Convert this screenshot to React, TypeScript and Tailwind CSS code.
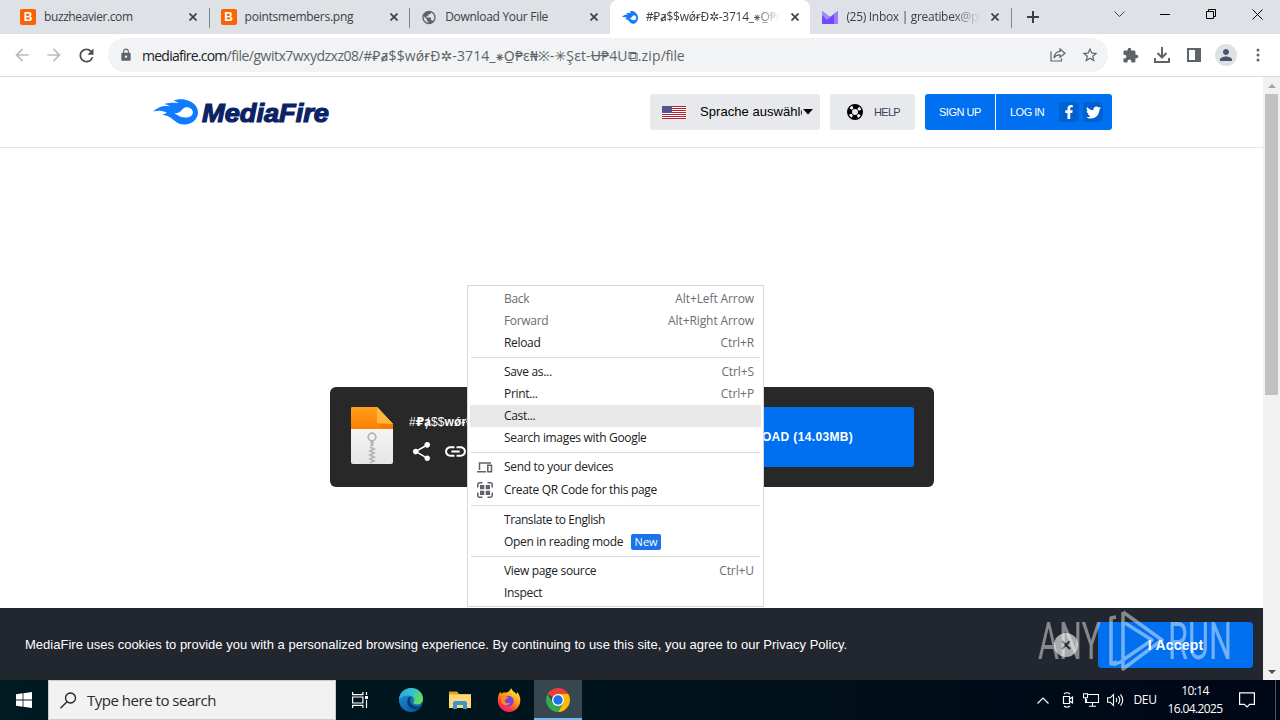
import type { ReactNode } from 'react'
import {
  MdArrowBack,
  MdArrowForward,
  MdExtension,
  MdLink,
  MdLock,
  MdPerson,
  MdPublic,
  MdRefresh,
  MdShare,
  MdStarBorder,
} from 'react-icons/md'
import { FaFacebookF, FaTwitter } from 'react-icons/fa'

interface TabProps {
  icon: ReactNode
  title: string
  active?: boolean
  separator?: boolean
  fade?: boolean
  tracking?: string
}

interface MenuRowProps {
  label: string
  shortcut?: string
  disabled?: boolean
  hovered?: boolean
  icon?: ReactNode
  badge?: string
  tall?: boolean
  tracking?: string
}

const FILE_NAME = '#₽ⱥ$$wǿɍĐ✲-3714_⁕O̲₱ɛ₦※-✳Şɛt-Ʉ₱4U⧉.zip'

function CloseX() {
  return (
    <svg width="8" height="8" viewBox="0 0 8 8" stroke="#3c4043" strokeWidth="1.7">
      <path d="M.5.5l7 7M7.5.5l-7 7" />
    </svg>
  )
}

function BFavicon() {
  return (
    <span className="flex h-4 w-4 items-center justify-center rounded-[2px] bg-[#fa6400] font-['Liberation_Sans'] text-[12px] leading-none font-bold text-white">
      B
    </span>
  )
}

function Flame({ width, height }: { width: number; height: number }) {
  return (
    <svg width={width} height={height} viewBox="0 0 44 26" preserveAspectRatio="none">
      <path
        fill="#0f7bff"
        fillRule="evenodd"
        d="M0 12.5C5 8 10 6 17 7.500C15 6.500 14 5.500 11 5C18 3.500 21 3.800 25 4C23 2.500 22 2 20 1.500C26-.5 31 0 35 1.800C41 4.500 44 8.500 44 13.500C44 20 38 25.500 31 25.500C26 25.500 23 23.500 19.500 20.500C16 17.500 13 16 8 15.800C11 15.400 12 14.600 13.500 13.400C9 11.500 5 11.300 0 12.500ZM20 14.600C24 15.200 26 18.600 31.500 18.600C36 18.600 39 16.500 39 13.400C39 10.300 36 8.300 32.500 8.300C28 8.300 29 14.400 20 14.600Z"
      />
    </svg>
  )
}

function Tab({ icon, title, active, separator, fade, tracking = '' }: TabProps) {
  return (
    <div
      className={`relative flex h-[34px] w-[200.6px] shrink-0 items-center pl-3 ${
        active ? 'rounded-t-lg bg-white' : ''
      }`}
    >
      <span className="flex w-4 shrink-0 justify-center">{icon}</span>
      <span
        className={`ml-2 w-[134px] overflow-hidden text-[12px] whitespace-nowrap text-[#3c4043] ${tracking} ${
          fade ? '[mask-image:linear-gradient(to_right,black_80%,transparent)]' : ''
        }`}
      >
        {title}
      </span>
      <span className="ml-[11px]">
        <CloseX />
      </span>
      {separator && <span className="absolute top-2 -right-px h-5 w-px bg-[#80868b]" />}
    </div>
  )
}

function TabStrip() {
  return (
    <div className="flex h-[34px] shrink-0 bg-[#dee1e6] pl-2">
      <Tab icon={<BFavicon />} title="buzzheavier.com" separator tracking="tracking-[-0.4px]" />
      <Tab icon={<BFavicon />} title="pointsmembers.png" separator tracking="tracking-[-0.25px]" />
      <Tab
        icon={<MdPublic size={17} color="#5f6368" />}
        title="Download Your File"
        tracking="tracking-[-0.3px]"
      />
      <Tab icon={<Flame width={16} height={13} />} title={FILE_NAME} active fade tracking="tracking-[-0.25px]" />
      <Tab
        icon={
          <svg width="16" height="14" viewBox="0 0 16 14">
            <path d="M0 1l8 6 8-6v11q0 2-2 2H0z" fill="#6d4aff" />
            <path d="M0 1l8 6-3 3-5-5z" fill="#a78bfa" />
            <path d="M12 4l4-3v11q0 2-2 2h-2z" fill="#9d7bff" />
          </svg>
        }
        title="(25) Inbox | greatibex@proton.me"
        separator
        fade
        tracking="tracking-[-0.3px]"
      />
      <div className="ml-px flex w-[42px] items-center justify-center">
        <svg width="12" height="12" viewBox="0 0 12 12" stroke="#3c4043" strokeWidth="2">
          <path d="M6 0v12M0 6h12" />
        </svg>
      </div>
      {/* window controls */}
      <div className="ml-auto flex h-7 text-black">
        <span className="flex w-[46px] items-center justify-center">
          <svg width="11" height="6" viewBox="0 0 11 6" fill="none" stroke="#3c4043">
            <path d="M.5.5l5 5 5-5" />
          </svg>
        </span>
        <span className="flex w-[46px] items-center justify-center">
          <span className="h-px w-[10px] bg-black" />
        </span>
        <span className="flex w-[46px] items-center justify-center">
          <svg width="10" height="10" viewBox="0 0 10 10" fill="none" stroke="#000">
            <path d="M.5 2.500h7v7h-7zM2.500 2.500v-2h7v7h-2" />
          </svg>
        </span>
        <span className="flex w-[46px] items-center justify-center">
          <svg width="11" height="11" viewBox="0 0 11 11" stroke="#000">
            <path d="M.5.5l10 10M10.500.5l-10 10" />
          </svg>
        </span>
      </div>
    </div>
  )
}

function Cell({ children }: { children: ReactNode }) {
  return <span className="flex w-8 shrink-0 items-center justify-center">{children}</span>
}

function Toolbar() {
  return (
    <div className="flex h-[43px] shrink-0 items-center border-b border-[#dadce0] bg-white px-[6px] text-[#5f6368]">
      <Cell>
        <MdArrowBack size={20} color="#babcbe" />
      </Cell>
      <Cell>
        <MdArrowForward size={20} color="#babcbe" />
      </Cell>
      <Cell>
        <MdRefresh size={21} color="#4a4d51" />
      </Cell>
      <div className="mx-[6px] flex h-[34px] min-w-0 flex-1 items-center rounded-full bg-[#f1f3f4] pr-[2px] pl-[11px]">
        <MdLock size={14} className="shrink-0" />
        <span className="ml-[9px] flex-1 overflow-hidden text-[14px] tracking-[-0.5px] whitespace-nowrap">
          <span className="tracking-[-0.75px] text-[#202124]">mediafire.com</span>
          /file/gwitx7wxydzxz08/
          <span className="tracking-[0.12px]">{FILE_NAME}</span>
          <span className="tracking-[-0.2px]">/file</span>
        </span>
        <Cell>
          <svg width="16" height="14" viewBox="0 0 16 14" fill="none" stroke="#5f6368" strokeWidth="1.2">
            <path d="M1 3.500V13h10.500V10.500" />
            <path d="M10 1l5 4.200-5 4V6.800C7 6.800 5 8 4 10.200 4.300 6.500 6.500 3.800 10 3.400z" />
          </svg>
        </Cell>
        <Cell>
          <MdStarBorder size={18} />
        </Cell>
      </div>
      <Cell>
        <MdExtension size={17} />
      </Cell>
      <Cell>
        <svg width="16" height="16" viewBox="0 0 16 16" fill="none" stroke="#5f6368" strokeWidth="2">
          <path d="M8 0v10M3.500 6L8 10.500 12.500 6M1 11v4h14v-4" />
        </svg>
      </Cell>
      <Cell>
        <svg width="14" height="14" viewBox="0 0 14 14">
          <path d="M1 1h12v12H1z" fill="none" stroke="#5f6368" strokeWidth="2" />
          <path d="M8 0h6v14H8z" fill="#5f6368" />
        </svg>
      </Cell>
      <Cell>
        <span className="flex h-[22px] w-[22px] items-center justify-center rounded-full bg-[#dee1e6]">
          <MdPerson size={18} color="#4c5468" />
        </span>
      </Cell>
      <Cell>
        <svg width="4" height="14" viewBox="0 0 4 14" fill="#5f6368">
          <circle cx="2" cy="2" r="1.500" />
          <circle cx="2" cy="7" r="1.500" />
          <circle cx="2" cy="12" r="1.500" />
        </svg>
      </Cell>
    </div>
  )
}

function UsFlag() {
  return (
    <svg width="24" height="13" viewBox="0 0 24 13" shapeRendering="crispEdges">
      <rect width="24" height="13" fill="#fff" />
      {[0, 2, 4, 6, 8, 10, 12].map((y) => (
        <rect key={y} y={y} width="24" height="1" fill="#b22234" />
      ))}
      <rect width="10" height="7" fill="#57548a" />
    </svg>
  )
}

function SiteHeader() {
  return (
    <header className="flex h-[71px] shrink-0 items-center border-b border-[#e3e5e8] bg-white pr-[151px] pl-[153px] font-['Liberation_Sans',sans-serif]">
      <div className="flex items-center">
        <Flame width={45} height={26} />
        <svg width="133" height="28" viewBox="0 0 133 28" className="ml-[2px]">
          <text
            x="2"
            y="23.500"
            textLength="127"
            lengthAdjust="spacingAndGlyphs"
            className="fill-[#0b2265] stroke-[#0b2265] font-['Liberation_Sans'] text-[26px] font-bold italic"
            strokeWidth="1.2"
          >
            MediaFire
          </text>
        </svg>
      </div>
      <div className="ml-auto flex gap-[10px]">
        <div className="flex h-9 w-[170px] items-center rounded-[3px] bg-[#e7e9ec] pl-3">
          <UsFlag />
          <span className="ml-[14px] w-[102px] overflow-hidden text-[13px] tracking-[0.05px] whitespace-nowrap text-black">
            Sprache auswählen
          </span>
          <svg width="10" height="6" viewBox="0 0 10 6" className="ml-px shrink-0">
            <path d="M0 0h10L5 5.500z" />
          </svg>
        </div>
        <div className="flex h-9 w-[85px] items-center rounded-[3px] bg-[#e7e9ec] pl-[17px]">
          <svg width="16" height="16" viewBox="0 0 16 16" fill="none">
            <circle cx="8" cy="8" r="5.500" stroke="#000" strokeWidth="5" />
            <circle
              cx="8"
              cy="8"
              r="5.300"
              stroke="#fff"
              strokeWidth="2.800"
              strokeDasharray="2.800 5.525"
              strokeDashoffset="-2.760"
            />
          </svg>
          <span className="ml-[11px] text-[11px] tracking-[-0.7px] text-[#3c4553]">HELP</span>
        </div>
        <div className="flex h-9 w-[187px] items-center overflow-hidden rounded-[3px] bg-[#0070f0] text-[11px] tracking-[-0.5px] text-white">
          <span className="flex h-full w-[71px] items-center border-r border-white pl-[14px]">SIGN UP</span>
          <span className="ml-[14px] w-[49px]">LOG IN</span>
          <span className="flex h-5 w-5 items-center justify-center rounded-[2px] bg-[#0061d1]">
            <FaFacebookF size={14} />
          </span>
          <span className="ml-1 flex h-5 w-5 items-center justify-center rounded-[2px] bg-[#0061d1]">
            <FaTwitter size={15} />
          </span>
        </div>
      </div>
    </header>
  )
}

function ZipIcon() {
  return (
    <svg width="42" height="57" viewBox="0 0 42 57">
      <defs>
        <linearGradient id="zipTop" x2="0" y2="1">
          <stop stopColor="#ffa01a" />
          <stop offset="1" stopColor="#ff7e00" />
        </linearGradient>
        <linearGradient id="zipBody" x2="0" y2="1">
          <stop stopColor="#fff" />
          <stop offset="1" stopColor="#e6e6e6" />
        </linearGradient>
      </defs>
      <path d="M0 2q0-2 2-2h24l16 17v38q0 2-2 2H2q-2 0-2-2z" fill="url(#zipBody)" />
      <path d="M0 22V2q0-2 2-2h24l16 17v5z" fill="url(#zipTop)" />
      <path d="M26 0l16 17H28q-2 0-2-2z" fill="#ffb739" />
      <path d="M26 16l16 1v5H32z" fill="#ee7400" opacity="0.6" />
      <circle cx="21" cy="30" r="3.800" fill="none" stroke="#b5b5b5" strokeWidth="1.800" />
      <path d="M21 33v6" stroke="#b5b5b5" strokeWidth="3" />
      <path d="M19 40l4 2-4 2 4 2-4 2 4 2-4 2 4 2-4 2" fill="none" stroke="#b5b5b5" strokeWidth="1.800" />
    </svg>
  )
}

function DownloadCard() {
  return (
    <div className="mt-[239px] ml-[330px] flex h-[100px] w-[604px] rounded-md bg-[#282828] p-5 font-['Liberation_Sans','DejaVu_Sans',sans-serif] text-white">
      <div className="ml-px">
        <ZipIcon />
      </div>
      <div className="ml-[16px] w-[230px] pt-[7px]">
        <p className="h-4 overflow-hidden text-[12px] leading-4 font-bold tracking-[0.1px] whitespace-nowrap">
          <span className="font-normal">#</span>₽ⱥ<span className="font-normal">$$</span>wǿɍĐ✲-3714
        </p>
        <div className="mt-[9px] flex h-6 items-center gap-[10px] pl-[1px]">
          <MdShare size={23} />
          <MdLink size={25} />
        </div>
      </div>
      <button className="ml-auto h-[60px] w-[260px] rounded-[3px] bg-[#0070f0] text-[12px] font-bold tracking-[0.35px]">
        DOWNLOAD (14.03MB)
      </button>
    </div>
  )
}

function MenuRow({
  label,
  shortcut,
  disabled,
  hovered,
  icon,
  badge,
  tall,
  tracking = 'tracking-[-0.32px]',
}: MenuRowProps) {
  return (
    <div
      className={`mx-[2px] flex items-center pr-[7px] ${tall ? 'h-6' : 'h-[22px]'} ${
        hovered ? 'bg-[#e8e8e8]' : ''
      } ${disabled ? 'text-[#6a6d70]' : 'text-[#202124]'}`}
    >
      <span className="flex w-[34px] items-center pl-[7px]">{icon}</span>
      <span className={tracking}>{label}</span>
      {badge && (
        <span className="ml-2 flex h-4 w-[30px] items-center justify-center rounded-[2px] bg-[#1a73e8] text-[11px] text-white">
          {badge}
        </span>
      )}
      {shortcut && <span className="ml-auto tracking-[-0.1px] text-[#6a6d70]">{shortcut}</span>}
    </div>
  )
}

function MenuDivider() {
  return (
    <div className="mx-[3px] flex h-[7px] items-center">
      <span className="h-px w-full bg-[#dadce0]" />
    </div>
  )
}

function ContextMenu() {
  return (
    <div className="absolute top-[285px] left-[467px] z-10 h-[322px] w-[297px] border border-[#d5d7da] bg-white pt-[2px] text-[12px] leading-4 whitespace-nowrap">
      <MenuRow label="Back" shortcut="Alt+Left Arrow" disabled />
      <MenuRow label="Forward" shortcut="Alt+Right Arrow" disabled />
      <MenuRow label="Reload" shortcut="Ctrl+R" />
      <MenuDivider />
      <MenuRow label="Save as..." shortcut="Ctrl+S" />
      <MenuRow label="Print..." shortcut="Ctrl+P" />
      <MenuRow label="Cast..." hovered />
      <MenuRow label="Search images with Google" />
      <MenuDivider />
      <MenuRow
        label="Send to your devices"
        icon={
          <svg width="16" height="11" viewBox="0 0 16 11" fill="none" stroke="#5f6368" strokeWidth="1.500">
            <path d="M2.500 8V1H14M0 9.800h9" />
            <path d="M10.800 3.200h3.700v6.600h-3.700z" />
          </svg>
        }
      />
      <MenuRow
        label="Create QR Code for this page"
        tall
        icon={
          <svg width="16" height="16" viewBox="0 0 16 16" fill="#5f6368">
            <path
              d="M5.500.8h-3Q.8.800.8 2.500v3M10.500.8h3q1.700 0 1.700 1.700v3M5.500 15.200h-3q-1.700 0-1.700-1.700v-3M10.500 15.200h3q1.700 0 1.700-1.700v-3"
              fill="none"
              stroke="#5f6368"
              strokeWidth="1.500"
            />
            <path d="M3 3h4.300v4.300H3zM8.700 3H13v4.300H8.700zM3 8.700h4.300V13H3zM8.700 8.700H13V13H8.700z" />
          </svg>
        }
      />
      <MenuDivider />
      <MenuRow label="Translate to English" tracking="tracking-[-0.42px]" />
      <MenuRow label="Open in reading mode" badge="New" />
      <MenuDivider />
      <MenuRow label="View page source" shortcut="Ctrl+U" />
      <MenuRow label="Inspect" />
    </div>
  )
}

function CookieBar() {
  return (
    <div className="relative mt-auto flex h-[72px] shrink-0 items-center bg-[#22262f] pt-[2px] pr-[10px] pl-[25px] font-['Liberation_Sans',sans-serif] text-white">
      <span className="text-[13px] tracking-[0.01px] whitespace-nowrap">
        MediaFire uses cookies to provide you with a personalized browsing experience. By continuing to use this site,
        you agree to our Privacy Policy.
      </span>
      <span className="ml-auto flex h-6 w-6 items-center justify-center rounded-full bg-[#a9abae]">
        <svg width="10" height="10" viewBox="0 0 10 10" stroke="#22262f" strokeWidth="1.800">
          <path d="M1 1l8 8M9 1L1 9" />
        </svg>
      </span>
      <button className="ml-5 h-[46px] w-[155px] rounded-[4px] bg-[#0070f0] text-[14px] font-bold tracking-[0.2px]">
        I Accept
      </button>
      <svg
        width="200"
        height="72"
        viewBox="0 0 200 72"
        className="absolute top-0 right-[28px] opacity-45"
        fill="#fff"
      >
        <text x="3" y="51" textLength="63" lengthAdjust="spacingAndGlyphs" className="font-['Roboto'] text-[51px]">
          ANY
        </text>
        <text x="133" y="51" textLength="64" lengthAdjust="spacingAndGlyphs" className="font-['Roboto'] text-[51px]">
          RUN
        </text>
        <g fill="none" stroke="#fff" strokeWidth="3.500" strokeLinejoin="round">
          <path d="M81 9l-5 1v46l6-2M88 4v49l-10 4M88 4l39 28-39 29v-9l29-20-27-17" />
        </g>
      </svg>
    </div>
  )
}

function Scrollbar() {
  return (
    <div className="flex w-[17px] shrink-0 flex-col items-center bg-[#f1f1f1]">
      <span className="flex h-[17px] items-center">
        <svg width="8" height="4" viewBox="0 0 8 4">
          <path d="M0 4l4-4 4 4z" fill="#a3a3a3" />
        </svg>
      </span>
      <span className="h-[301px] w-[13px] bg-[#c1c1c1]" />
      <span className="mt-auto flex h-[17px] items-center">
        <svg width="8" height="4" viewBox="0 0 8 4">
          <path d="M0 0l4 4 4-4z" fill="#505050" />
        </svg>
      </span>
    </div>
  )
}

function EdgeIcon() {
  return (
    <svg width="24" height="24" viewBox="0 0 24 24">
      <defs>
        <linearGradient id="edgeTop" x1="0" x2="1" y1="0.2" y2="0.6">
          <stop stopColor="#2aa7e8" />
          <stop offset="0.5" stopColor="#32c4c8" />
          <stop offset="1" stopColor="#66e04e" />
        </linearGradient>
        <linearGradient id="edgeLow" x2="0.6" y2="1">
          <stop stopColor="#1d9ae0" />
          <stop offset="1" stopColor="#0c59a4" />
        </linearGradient>
      </defs>
      <circle cx="12" cy="12" r="12" fill="url(#edgeLow)" />
      <path
        d="M0 11.500C.5 5 5.500 0 12 0c7 0 12 5 12 10.500 0 4-3 6-6 6-3.200 0-4.500-1.200-3.500-2.500 2-3-.5-6.500-4.500-6.500C5.500 7.500 1.500 9 0 11.500z"
        fill="url(#edgeTop)"
      />
      <path d="M9 10.500c-2.500 5 2 10.500 7 10.500 2.500 0 4.500-1 6-2.500-5 2-11-1-11-6 0-1.500.7-2.500 1.500-3-1.500-.5-3 0-3.500 1z" fill="#06395f" />
    </svg>
  )
}

function FolderIcon() {
  return (
    <svg width="22" height="20" viewBox="0 0 22 20">
      <path d="M0 1.500h8l2 2.500h12v14H0z" fill="#e6a417" />
      <path d="M0 4.500h22V18H0z" fill="#ffd978" />
      <path d="M4 19v-6q0-2 2-2h10q2 0 2 2v6h-4v-4H8v4z" fill="#3d94d1" />
    </svg>
  )
}

function FirefoxIcon() {
  return (
    <svg width="24" height="24" viewBox="0 0 24 24">
      <defs>
        <linearGradient id="foxBody" x1="0.8" x2="0.2" y2="1">
          <stop stopColor="#fff44f" />
          <stop offset="0.45" stopColor="#ff980e" />
          <stop offset="0.75" stopColor="#ff3647" />
          <stop offset="1" stopColor="#e31587" />
        </linearGradient>
      </defs>
      <path
        d="M14 0c1 3 4 4 5.500 6.500L20 4c2.500 2.500 3.500 6 3.300 9C23 19 18 24 12 24S1 19 .8 13C.7 9 1.500 6 3.500 3.500L4 6c1-1 2-1.500 3.500-1.500C9 5 13 4 14 0z"
        fill="url(#foxBody)"
      />
      <circle cx="11.500" cy="13" r="5.200" fill="#7542e5" />
      <path d="M4 9c3-1 6-1 8 1-3 0-2.500 2-4.500 2.500C8 15 11 16 13 14.500c-1 4-8 3.500-9-1z" fill="#ff8a16" />
    </svg>
  )
}

function ChromeIcon() {
  return (
    <svg width="24" height="24" viewBox="0 0 24 24">
      <path d="M12 12L1.610 6A12 12 0 0 1 22.390 6z" fill="#ea4335" />
      <path d="M12 6h10.390A12 12 0 0 1 12 24l5.200-9z" fill="#fbbc04" />
      <path d="M1.610 6A12 12 0 0 0 12 24l5.200-9L12 12 6.800 15z" fill="#34a853" />
      <circle cx="12" cy="12" r="6" fill="#fff" />
      <circle cx="12" cy="12" r="4.700" fill="#1a73e8" />
    </svg>
  )
}

function TaskButton({ children, active }: { children: ReactNode; active?: boolean }) {
  return (
    <span
      className={`flex h-10 w-12 items-center justify-center ${
        active ? 'border-b-2 border-[#76b9ed] bg-[#36474f] pt-[2px]' : ''
      }`}
    >
      {children}
    </span>
  )
}

function Taskbar() {
  return (
    <div className="flex h-10 shrink-0 bg-linear-to-r from-[#001a22] via-[#00131c] to-[#000716] text-white">
      <TaskButton>
        <svg width="16" height="16" viewBox="0 0 16 16" fill="#fff">
          <path d="M0 2.200l6.600-.9v6.300H0zM7.400 1.200L16 0v7.600H7.400zM0 8.400h6.600v6.300L0 13.800zM7.400 8.400H16V16l-8.600-1.200z" />
        </svg>
      </TaskButton>
      <div className="flex w-[288px] items-center border border-[#c9cbcc] bg-[#f2f2f2] pl-[11px] text-[#2b2b2b]">
        <svg width="17" height="17" viewBox="0 0 17 17" fill="none" stroke="#1f1f1f" strokeWidth="1.300">
          <circle cx="10.500" cy="6" r="5" />
          <path d="M7 9.800L.5 16.300" />
        </svg>
        <span className="ml-[10px] text-[15px] tracking-[-0.48px]">Type here to search</span>
      </div>
      <TaskButton>
        <svg width="16" height="16" viewBox="0 0 16 16" fill="none" stroke="#fff" strokeWidth="1.200">
          <path d="M.6 0v2.600h10.300V0M.6 5h10.300v6H.6zM.6 16v-2.600h10.300V16M14.500 0v3M14.500 8v8" />
          <path d="M13 4h3v3h-3z" fill="#fff" stroke="none" />
        </svg>
      </TaskButton>
      <div className="ml-[3px] flex gap-px">
        <TaskButton>
          <EdgeIcon />
        </TaskButton>
        <TaskButton>
          <FolderIcon />
        </TaskButton>
        <TaskButton>
          <FirefoxIcon />
        </TaskButton>
        <TaskButton active>
          <ChromeIcon />
        </TaskButton>
      </div>

      {/* notification area */}
      <div className="ml-auto flex items-center text-[12px] leading-none">
        <span className="flex w-6 justify-center">
          <svg width="12" height="7" viewBox="0 0 12 7" fill="none" stroke="#fff" strokeWidth="1.200">
            <path d="M.5 6.500L6 1l5.500 5.500" />
          </svg>
        </span>
        <span className="flex w-6 justify-center pl-px">
          <svg width="12" height="16" viewBox="0 0 12 16" fill="none" stroke="#fff" strokeWidth="1.200">
            <path d="M1.500 4.500h6v7h-6zM7.500 7l3-2v6l-3-2M2 2q3-2.500 6 0M2 14q3 2.500 6 0" />
          </svg>
        </span>
        <span className="flex w-6 justify-center">
          <svg width="16" height="14" viewBox="0 0 16 14" fill="none" stroke="#fff" strokeWidth="1.100">
            <path d="M5 1.500h10.500v8H3.500V6M9.500 9.500v3.500M6 13.300h7M.5.800h4v4h-4zM2.500 5v5" />
          </svg>
        </span>
        <span className="flex w-6 justify-center">
          <svg width="17" height="14" viewBox="0 0 17 14" fill="none" stroke="#fff" strokeWidth="1.100">
            <path d="M.6 4.800h2.600L6.500 1.500v11L3.200 9.200H.6zM9 5q1.500 2 0 4M11.300 3.200q3 3.800 0 7.600M13.500 1.300q4.500 5.700 0 11.400" />
          </svg>
        </span>
        <span className="w-[36px] text-center tracking-[-0.3px]">DEU</span>
        <div className="w-[64px] text-center tracking-[-0.6px]">
          <p className="h-[18px] leading-[18px]">10:14</p>
          <p className="h-[18px] leading-[18px]">16.04.2025</p>
        </div>
        <span className="ml-[12px] flex w-[16px] justify-center">
          <svg width="16" height="16" viewBox="0 0 16 16" fill="none" stroke="#fff" strokeWidth="1.200">
            <path d="M.6.800h14.800v11.500h-4.700L8 15l-2.700-2.700H.6z" />
          </svg>
        </span>
        <span className="ml-[20px] h-10 w-[5px] border-l border-[#4d5560]" />
      </div>
    </div>
  )
}

export default function App() {
  return (
    <div className="relative flex h-[720px] w-[1280px] flex-col overflow-hidden bg-white font-['Open_Sans','Noto_Sans','DejaVu_Sans',sans-serif]">
      <TabStrip />
      <Toolbar />
      <div className="flex min-h-0 flex-1">
        <main className="flex min-w-0 flex-1 flex-col">
          <SiteHeader />
          <DownloadCard />
          <CookieBar />
        </main>
        <Scrollbar />
      </div>
      <Taskbar />
      <ContextMenu />
    </div>
  )
}
